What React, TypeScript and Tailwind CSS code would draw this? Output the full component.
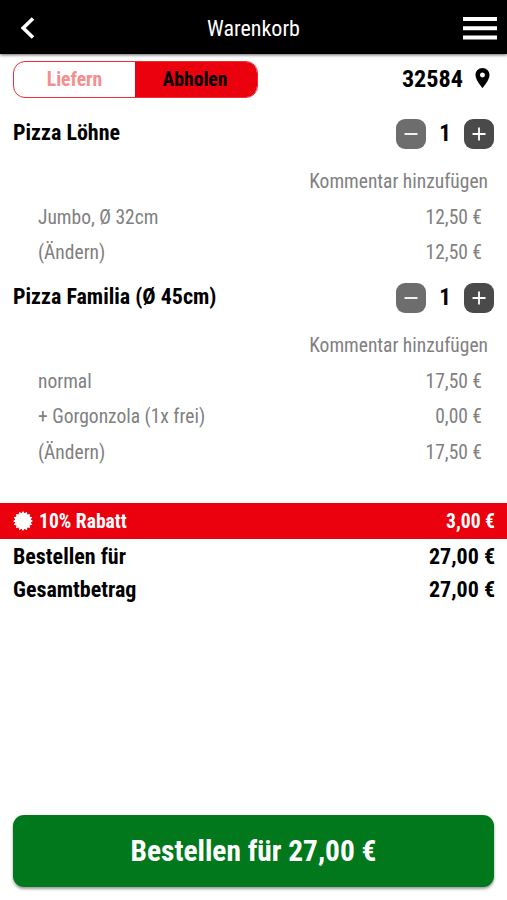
import React from "react";
import { MdLocationOn } from "react-icons/md";

const items = [
    {
        name: "Pizza Löhne",
        count: 1,
        lines: [
            { label: "Jumbo, Ø 32cm", price: "12,50 €" },
            { label: "(Ändern)", price: "12,50 €" },
        ],
    },
    {
        name: "Pizza Familia (Ø 45cm)",
        count: 1,
        lines: [
            { label: "normal", price: "17,50 €" },
            { label: "+ Gorgonzola (1x frei)", price: "0,00 €" },
            { label: "(Ändern)", price: "17,50 €" },
        ],
    },
];

export default function App() {
    return (
        <div className="flex h-[900px] w-[507px] flex-col overflow-hidden bg-white font-['Roboto_Condensed',Roboto,sans-serif] font-stretch-condensed text-black">
            <Header />
            <main className="flex flex-1 flex-col pt-[7px]">
                <div className="flex h-[36px] items-center justify-between pr-[12px] pl-[13px]">
                    <div className="flex h-[37px] w-[245px] overflow-hidden rounded-[12px] border border-[#ec2f38] text-[19.6px] font-bold">
                        <button className="w-[121px] pt-px text-[#f78d8d]">Liefern</button>
                        <button className="flex-1 bg-[#eb000d] pt-px pr-[2px]">Abholen</button>
                    </div>
                    <div className="flex items-center">
                        <span className="text-[24.2px] font-bold">32584</span>
                        <MdLocationOn className="mb-[2px] ml-[7px] h-[24px] w-[25px]" />
                    </div>
                </div>

                <div className="mt-[19px] flex h-[387px] flex-col gap-[10.5px]">
                    {items.map((item) => (
                        <CartItem key={item.name} item={item} />
                    ))}
                </div>

                <div className="flex h-[36px] items-center bg-[#eb000d] px-[13px] text-[19.6px] font-bold text-white">
                    <Seal />
                    <span className="ml-[6px] pt-[2px]">10% Rabatt</span>
                    <span className="-mr-px ml-auto pt-[2px]">3,00 €</span>
                </div>
                <div className="pt-px">
                    <TotalRow label="Bestellen für" />
                    <TotalRow label="Gesamtbetrag" />
                </div>

                <button className="mx-[13px] mt-auto mb-[13px] h-[72px] rounded-[11px] bg-[#01781c] text-[29.4px] font-bold text-white shadow-[0_2px_3px_rgba(0,0,0,0.4)]">
                    Bestellen für 27,00 €
                </button>
            </main>
        </div>
    );
}

function Header() {
    return (
        <header className="flex h-[54px] items-center justify-between bg-black pr-[10px] pl-[20px] text-white shadow-[0_1px_3px_rgba(0,0,0,0.6)]">
            <svg className="mt-[2px] h-[22px] w-[24px]" viewBox="0 0 24 22" fill="none">
                <path d="M13 1.5 3.2 11 13 20.5" stroke="currentColor" strokeWidth="3.6" />
            </svg>
            <h1 className="pt-[2px] text-[22px]">Warenkorb</h1>
            <svg className="mt-[2px] h-[23px] w-[34px]" viewBox="0 0 34 23" fill="currentColor">
                <path d="M0 0h34v4H0zM0 9.3h34v4H0zM0 18.5h34v4H0z" />
            </svg>
        </header>
    );
}

function CartItem({ item }: { item: (typeof items)[number] }) {
    return (
        <section>
            <div className="flex h-[36px] items-center px-[13px] text-[22px] font-bold">
                <h2 className="mb-[4px]">{item.name}</h2>
                <button className="ml-auto flex size-[30px] items-center justify-center rounded-[9px] bg-[#6d6d6d] text-white">
                    <svg className="size-[14px]" viewBox="0 0 14 14" stroke="currentColor" strokeWidth="1.8">
                        <path d="M.5 7h13" />
                    </svg>
                </button>
                <span className="w-[38px] pt-px text-center text-[23px]">{item.count}</span>
                <button className="flex size-[30px] items-center justify-center rounded-[9px] bg-[#4a4a4a] text-white">
                    <svg className="size-[14px]" viewBox="0 0 14 14" stroke="currentColor" strokeWidth="1.8">
                        <path d="M.5 7h13M7 .5v13" />
                    </svg>
                </button>
            </div>
            <div className="mt-[12px] -mb-px text-[19.5px] text-[#808080]">
                <p className="pr-[19px] text-right leading-[35.5px]">Kommentar hinzufügen</p>
                {item.lines.map((line) => (
                    <div key={line.label} className="flex justify-between pr-[25px] pl-[38px] leading-[35.5px]">
                        <span>{line.label}</span>
                        <span>{line.price}</span>
                    </div>
                ))}
            </div>
        </section>
    );
}

function TotalRow({ label }: { label: string }) {
    return (
        <div className="flex h-[33px] items-center justify-between pr-[12px] pl-[13px] text-[22px] font-bold">
            <span>{label}</span>
            <span>27,00 €</span>
        </div>
    );
}

// Round discount badge with small teeth
function Seal() {
    const points = Array.from({ length: 32 }, (_, i) => {
        const r = i % 2 === 0 ? 10 : 7.9;
        const a = (i * Math.PI) / 16;
        return `${(10 + r * Math.sin(a)).toFixed(2)},${(10 - r * Math.cos(a)).toFixed(2)}`;
    }).join(" ");

    return (
        <svg className="size-[20px]" viewBox="0 0 20 20" fill="currentColor">
            <polygon points={points} />
        </svg>
    );
}
